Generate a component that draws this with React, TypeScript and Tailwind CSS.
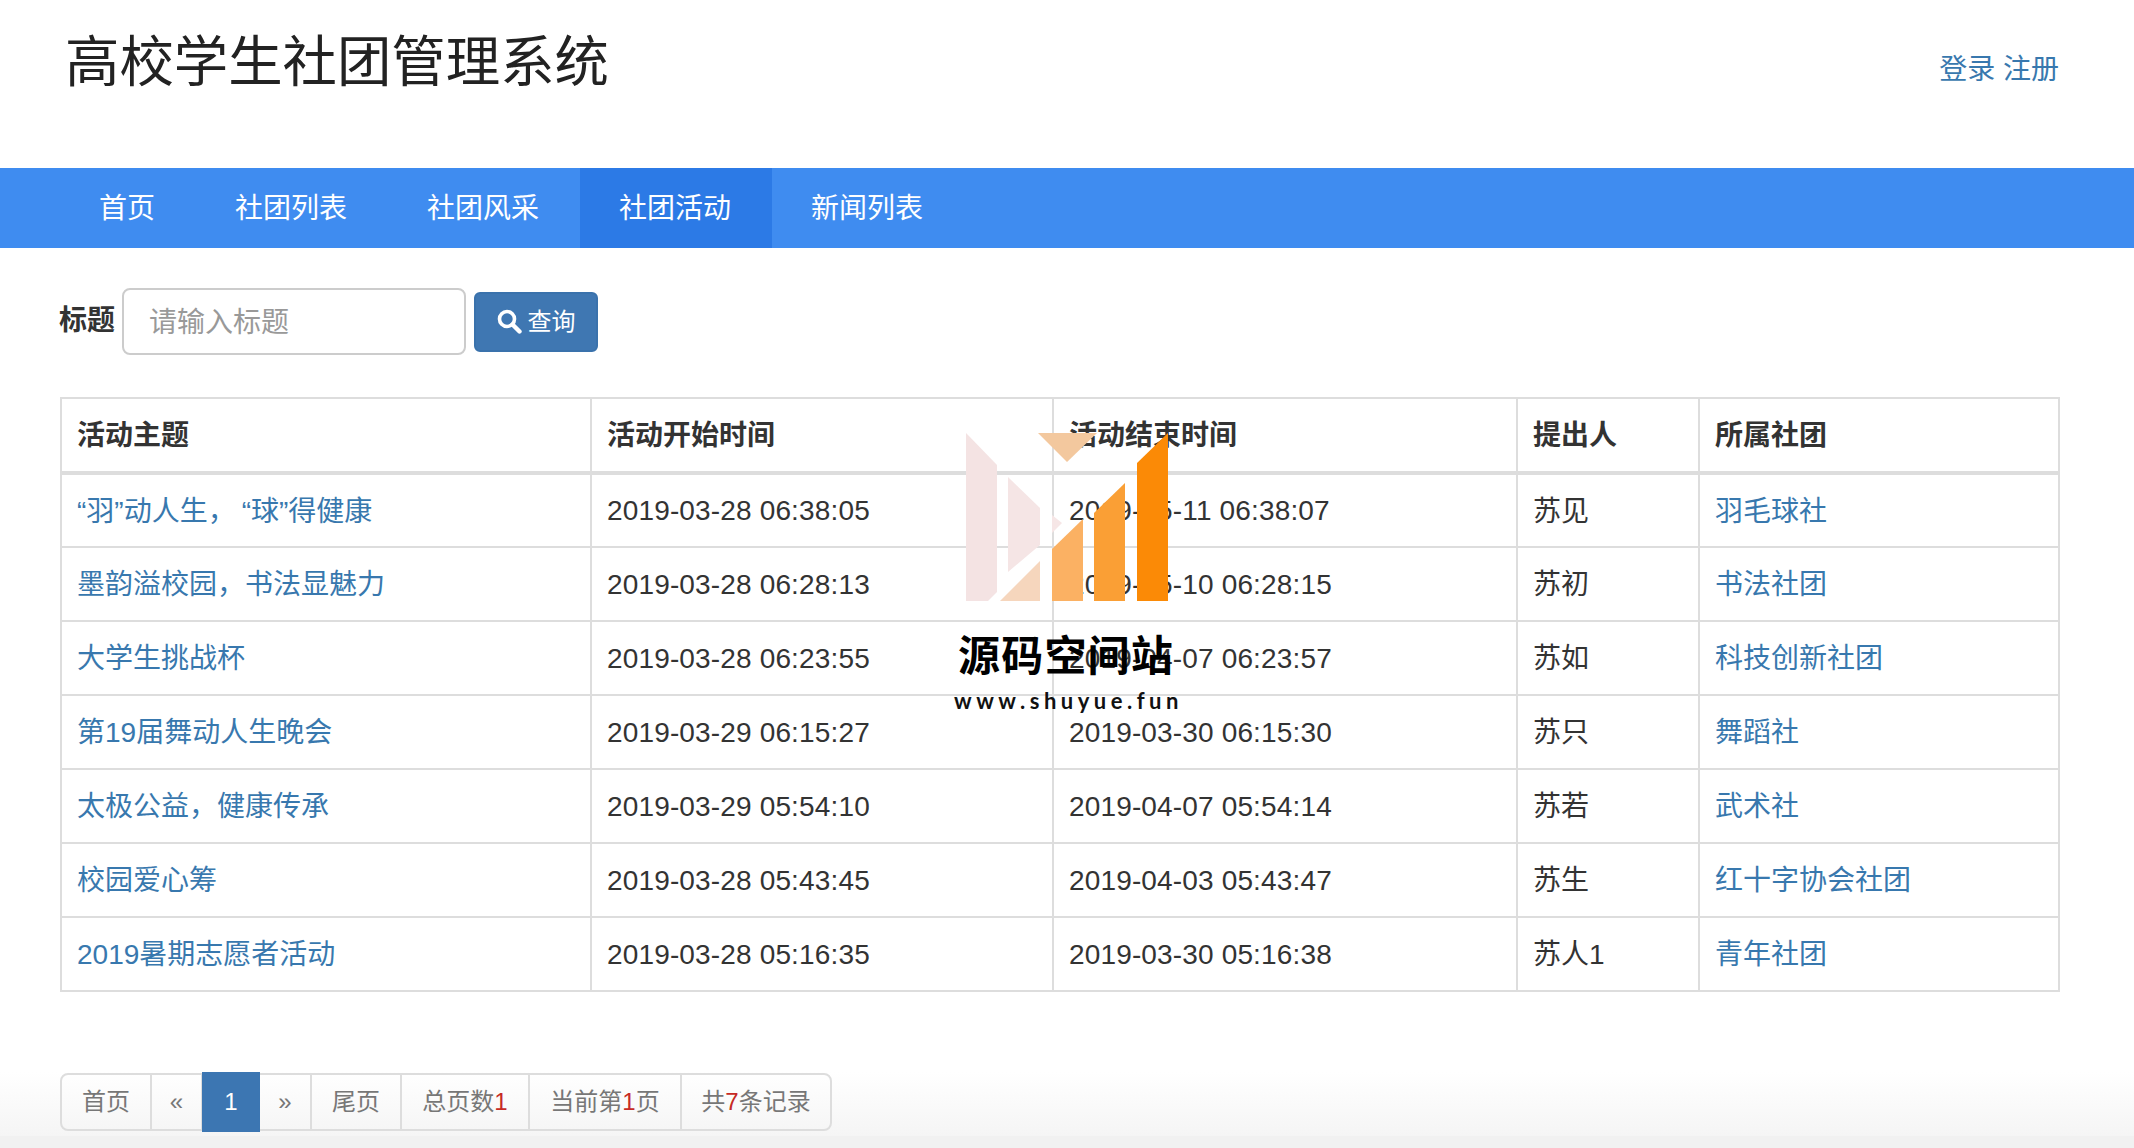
import React from "react";

const nav = ["首页", "社团列表", "社团风采", "社团活动", "新闻列表"];
const rows: React.ReactNode[][] = [
  [<>“羽”动人生，<span className="ml-[6px]">“球”</span>得健康</>, "2019-03-28 06:38:05", "2019-05-11 06:38:07", "苏见", "羽毛球社"],
  ["墨韵溢校园，书法显魅力", "2019-03-28 06:28:13", "2019-05-10 06:28:15", "苏初", "书法社团"],
  ["大学生挑战杯", "2019-03-28 06:23:55", "2019-04-07 06:23:57", "苏如", "科技创新社团"],
  ["第19届舞动人生晚会", "2019-03-29 06:15:27", "2019-03-30 06:15:30", "苏只", "舞蹈社"],
  ["太极公益，健康传承", "2019-03-29 05:54:10", "2019-04-07 05:54:14", "苏若", "武术社"],
  ["校园爱心筹", "2019-03-28 05:43:45", "2019-04-03 05:43:47", "苏生", "红十字协会社团"],
  ["2019暑期志愿者活动", "2019-03-28 05:16:35", "2019-03-30 05:16:38", "苏人1", "青年社团"],
];
const heads = ["活动主题", "活动开始时间", "活动结束时间", "提出人", "所属社团"];

function Red({ children }: { children: React.ReactNode }) {
  return <span className="text-[#c62a24]">{children}</span>;
}

function PageCell({ w, children, first, last }: { w: string; children: React.ReactNode; first?: boolean; last?: boolean }) {
  return (
    <li
      className={`${w} h-[58px] flex items-center justify-center border-2 border-[#ddd] text-[#777] ${first ? "rounded-l-lg" : "-ml-[2px]"} ${last ? "rounded-r-lg" : ""}`}
    >
      {children}
    </li>
  );
}

function cellClass(i: number) {
  if (i === 1 || i === 2) return "pt-[1px] tracking-[0.15px]";
  if (i === 0 || i === 4) return "pt-[2px] text-[#3878ae]";
  return "pt-[2px]";
}

export default function App() {
  return (
    <div className="relative flex flex-col w-[2134px] h-[1148px] overflow-hidden bg-white text-[28px] text-[#333] font-['Liberation_Sans','Noto_Sans_CJK_SC',sans-serif]">
      <header className="h-[168px] shrink-0 flex justify-between pl-[65px] pr-[75px]">
        <h1 className="text-[54.4px] leading-[60px] pt-[33px] font-normal text-[#222]">高校学生社团管理系统</h1>
        <div className="pt-[50px] text-[#3878ae] leading-[40px] whitespace-pre">登录 注册</div>
      </header>

      <nav className="h-[80px] shrink-0 bg-[#3f8cf0] flex pl-[60px] text-white">
        {nav.map((n, i) => (
          <a key={n} className={`pl-[39px] pr-[41px] h-full flex items-center pt-[2px] ${i === 3 ? "bg-[#2c7ae6]" : ""}`}>
            {n}
          </a>
        ))}
      </nav>

      <form className="mt-[40px] ml-[60px] flex items-center h-[67px] shrink-0">
        <label className="font-bold w-[62px] -mt-[2px] -ml-[1px] mr-[1px]">标题</label>
        <div className="w-[344px] h-[67px] border-2 border-[#ccc] rounded-lg flex items-center pl-[25px] pt-[2px] text-[#999] bg-white">请输入标题</div>
        <button type="button" className="ml-[8px] w-[124px] h-[60px] rounded-md bg-[#3f77b2] border-2 border-[#3a72ac] text-white text-[24px] flex items-center justify-center gap-[6px]">
          <svg width="25" height="25" viewBox="0 0 25 25" fill="none" aria-hidden="true">
            <circle cx="10" cy="10" r="7.5" stroke="white" strokeWidth="3.6" />
            <path d="M15.5 15.5 L22.5 22.5" stroke="white" strokeWidth="4.4" strokeLinecap="round" />
          </svg>
          查询
        </button>
      </form>

      <table className="mt-[42px] ml-[60px] w-[1998px] shrink-0 table-fixed border-collapse">
        <colgroup>
          <col className="w-[530px]" />
          <col className="w-[462px]" />
          <col className="w-[464px]" />
          <col className="w-[182px]" />
          <col className="w-[360px]" />
        </colgroup>
        <thead>
          <tr>
            {heads.map((h) => (
              <th key={h} className="h-[75px] pl-[15px] pr-[16px] pt-[2px] text-left font-bold border-2 border-b-[4px] border-[#ddd]">
                {h}
              </th>
            ))}
          </tr>
        </thead>
        <tbody>
          {rows.map((r) => (
            <tr key={String(r[1])}>
              {r.map((c, i) => (
                <td key={i} className={`h-[74px] pl-[15px] pr-[16px] border-2 border-[#ddd] ${cellClass(i)}`}>
                  {c}
                </td>
              ))}
            </tr>
          ))}
        </tbody>
      </table>

      <div className="mt-[80px] h-[64px] shrink-0 pl-[60px] bg-gradient-to-b from-white to-[#f5f5f5]">
        <ul className="flex items-center text-[24px] h-[60px]">
          <PageCell w="w-[92px]" first>首页</PageCell>
          <PageCell w="w-[53px]">«</PageCell>
          <li className="-ml-[1px] w-[58px] h-[60px] bg-[#3c76b2] text-white flex items-center justify-center relative">1</li>
          <PageCell w="w-[54px]">»</PageCell>
          <PageCell w="w-[92px]">尾页</PageCell>
          <PageCell w="w-[130px]">总页数<Red>1</Red></PageCell>
          <PageCell w="w-[154px]">当前第<Red>1</Red>页</PageCell>
          <PageCell w="w-[152px]" last>共<Red>7</Red>条记录</PageCell>
        </ul>
      </div>
      <footer className="flex-1 bg-[#f1f1f1]" />

      {/* Watermark over the table */}
      <svg className="absolute left-[950px] top-[420px]" width="240" height="190" viewBox="950 420 240 190" aria-hidden="true">
        <polygon points="966,433 997,465 997,592 988,601 966,601" fill="#f4e3e3" />
        <polygon points="1008,477 1040,508 1040,545 1008,572" fill="#f5e5e5" />
        <polygon points="1052,515 1062,523 1052,533" fill="#f6e6e6" />
        <polygon points="1038,433 1097,433 1067,462" fill="#f3c89e" />
        <polygon points="1000,601 1040,561 1040,601" fill="#f6d6bd" />
        <polygon points="1052,601 1052,549 1083,519 1083,601" fill="#fbb163" />
        <polygon points="1094,601 1094,513 1125,483 1125,601" fill="#fa9f35" />
        <polygon points="1137,601 1137,463 1168,433 1168,601" fill="#fb8a06" />
      </svg>
      <div className="absolute left-[958px] top-[630px] text-[42px] leading-[54px] font-bold text-black tracking-[1.2px] whitespace-nowrap">源码空间站</div>
      <div className="absolute left-[954px] top-[687px] text-[22px] leading-[28px] font-bold text-[#111] tracking-[4.5px] whitespace-nowrap font-['Lato',sans-serif]">www.shuyue.fun</div>
    </div>
  );
}
